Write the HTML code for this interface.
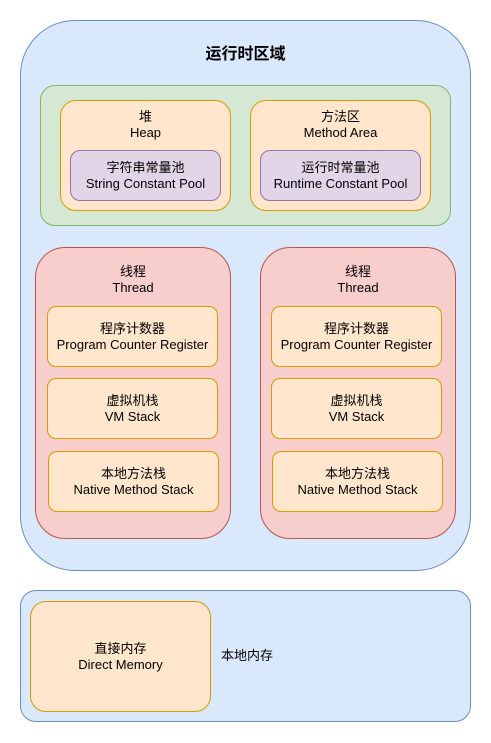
<!DOCTYPE html>
<html><head><meta charset="utf-8"><style>
body{margin:0;width:491px;height:743px;background:#fff;position:relative;overflow:hidden;font-family:"Liberation Sans","Noto Sans CJK SC",sans-serif;font-size:13px;color:#000}
.b{position:absolute;box-sizing:border-box;border:1px solid;display:flex;flex-direction:column;align-items:center;justify-content:center;text-align:center;line-height:16px}
.blue{background:#dae8fc;border-color:#6c8ebf}
.green{background:#d5e8d4;border-color:#82b366}
.or{background:#ffe6cc;border-color:#d79b00}
.pu{background:#e1d5e7;border-color:#9673a6}
.red{background:#f8cecc;border-color:#b85450}
.t{position:absolute;text-align:center;line-height:16px}
</style></head><body>
<div class="b blue" style="left:20px;top:20px;width:451px;height:551px;border-radius:55px"></div>
<div class="t" style="left:20px;width:451px;top:45px;font-size:16px;font-weight:bold;line-height:20px">运行时区域</div>
<div class="b green" style="left:40px;top:85px;width:411px;height:141px;border-radius:15px"></div>
<div class="b or" style="left:60px;top:100px;width:171px;height:111px;border-radius:16px"></div>
<div class="t" style="left:60px;width:171px;top:109px">堆<br>Heap</div>
<div class="b pu" style="left:70px;top:150px;width:151px;height:51px;border-radius:10px">字符串常量池<br>String Constant Pool</div>
<div class="b or" style="left:250px;top:100px;width:181px;height:111px;border-radius:16px"></div>
<div class="t" style="left:250px;width:181px;top:109px">方法区<br>Method Area</div>
<div class="b pu" style="left:260px;top:150px;width:161px;height:51px;border-radius:10px">运行时常量池<br>Runtime Constant Pool</div>

<div class="b red" style="left:35px;top:247px;width:196px;height:292px;border-radius:30px"></div>
<div class="t" style="left:35px;width:196px;top:264px">线程<br>Thread</div>
<div class="b or" style="left:47px;top:306px;width:171px;height:61px;border-radius:9px">程序计数器<br>Program Counter Register</div>
<div class="b or" style="left:47px;top:378px;width:171px;height:61px;border-radius:9px">虚拟机栈<br>VM Stack</div>
<div class="b or" style="left:48px;top:451px;width:171px;height:61px;border-radius:9px">本地方法栈<br>Native Method Stack</div>

<div class="b red" style="left:260px;top:247px;width:196px;height:292px;border-radius:30px"></div>
<div class="t" style="left:260px;width:196px;top:264px">线程<br>Thread</div>
<div class="b or" style="left:271px;top:306px;width:171px;height:61px;border-radius:9px">程序计数器<br>Program Counter Register</div>
<div class="b or" style="left:271px;top:378px;width:171px;height:61px;border-radius:9px">虚拟机栈<br>VM Stack</div>
<div class="b or" style="left:272px;top:451px;width:171px;height:61px;border-radius:9px">本地方法栈<br>Native Method Stack</div>

<div class="b blue" style="left:20px;top:590px;width:451px;height:132px;border-radius:16px"></div>
<div class="b or" style="left:30px;top:601px;width:181px;height:111px;border-radius:16px">直接内存<br>Direct Memory</div>
<div class="t" style="left:221px;top:648px;text-align:left">本地内存</div>
</body></html>
